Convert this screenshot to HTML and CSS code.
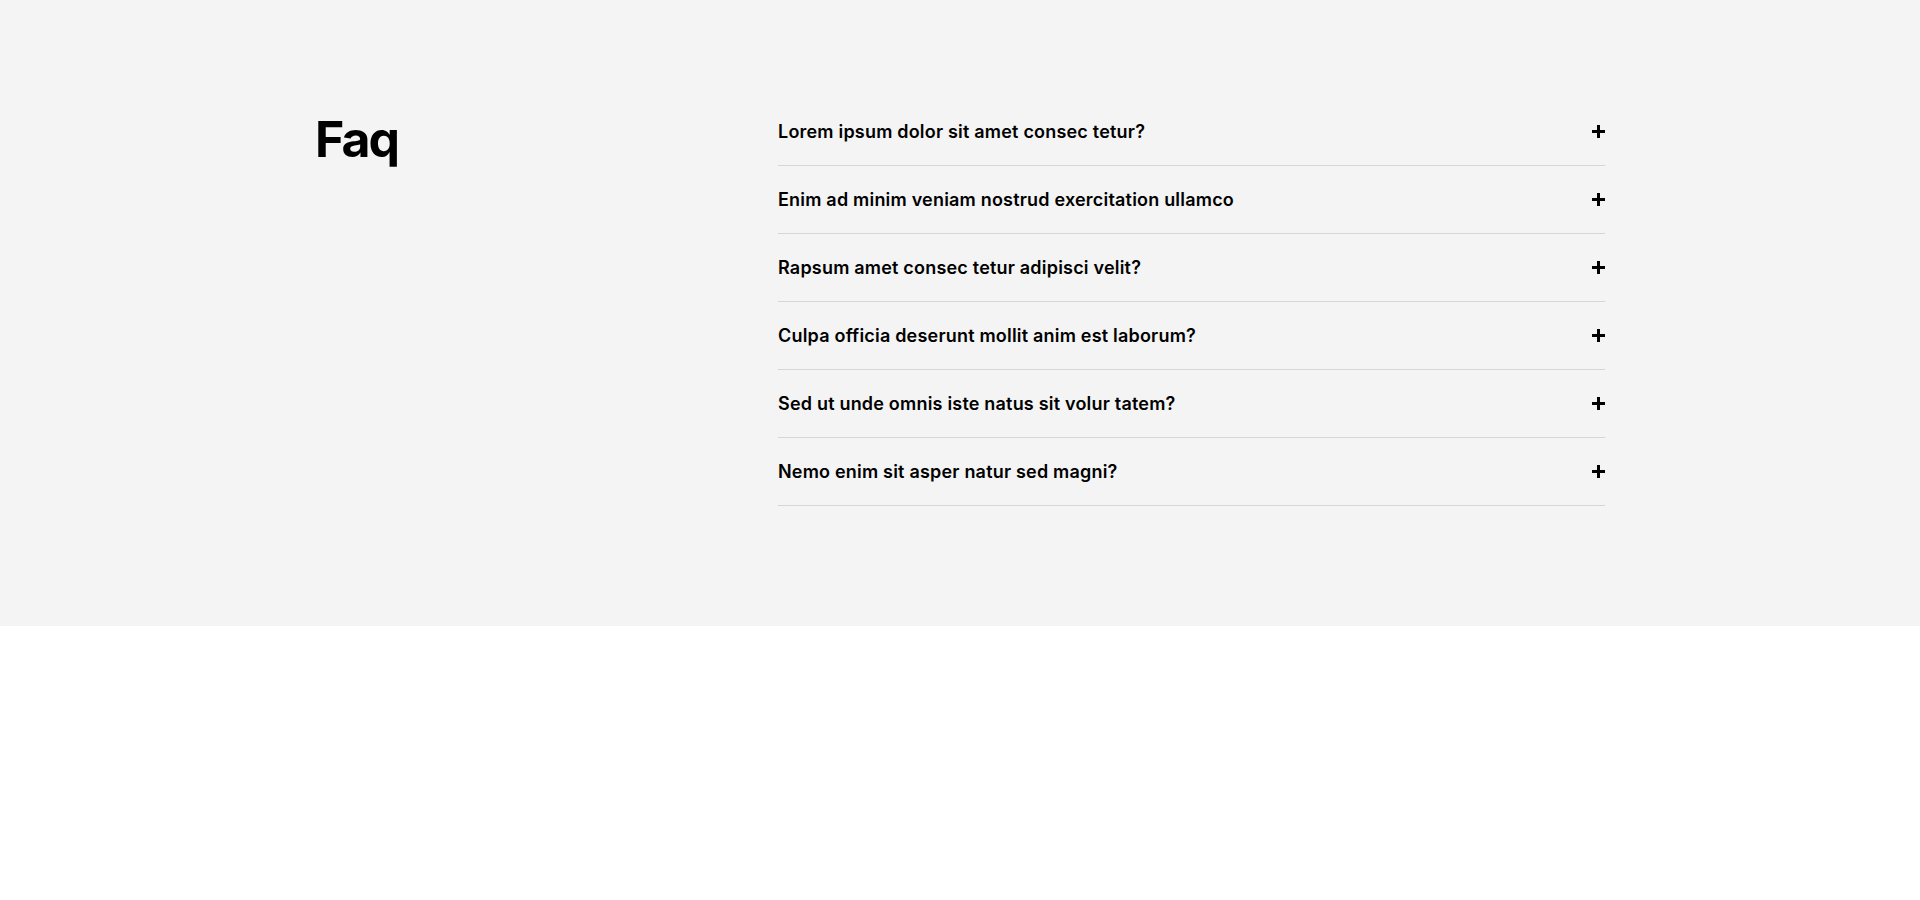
FILE: index.html
```html
<!DOCTYPE html>
<html lang="en">
  <head>
    <meta charset="UTF-8" />
    <meta name="viewport" content="width=device-width, initial-scale=1.0" />
    <title>Faq</title>
    <link rel="stylesheet" href="styles.css">
  </head>
  <body>
    <section id="faq">
      <div class="container">
        <h2 class="faq-title">Faq</h2>
        <ul class="faq-list">
          <li class="faq-item"><span>Lorem ipsum dolor sit amet consec tetur?</span><i class="plus"></i></li>
          <li class="faq-item"><span>Enim ad minim veniam nostrud exercitation ullamco</span><i class="plus"></i></li>
          <li class="faq-item"><span>Rapsum amet consec tetur adipisci velit?</span><i class="plus"></i></li>
          <li class="faq-item"><span>Culpa officia deserunt mollit anim est laborum?</span><i class="plus"></i></li>
          <li class="faq-item"><span>Sed ut unde omnis iste natus sit volur tatem?</span><i class="plus"></i></li>
          <li class="faq-item"><span>Nemo enim sit asper natur sed magni?</span><i class="plus"></i></li>
        </ul>
      </div>
    </section>
  </body>
</html>
```

FILE: styles.css
```css
* {
  box-sizing: border-box;
  margin: 0;
  padding: 0;
}

body {
  font-family: Inter, "Noto Sans", Arial, sans-serif;
  color: #000;
  background-color: #fff;
}

#faq {
  background-color: #f4f4f4;
  padding: 98px 0 120px;
}

.container {
  width: 1290px;
  margin: 0 auto;
  display: grid;
  grid-template-columns: 463px 1fr;
}

.faq-title {
  font-size: 50px;
  line-height: 60px;
  font-weight: 700;
  letter-spacing: -2px;
  margin-top: 11px;
}

.faq-list {
  list-style: none;
}

.faq-item {
  display: flex;
  justify-content: space-between;
  align-items: center;
  height: 68px;
  border-bottom: 1px solid #d6d6d6;
  font-size: 18px;
  font-weight: 600;
  letter-spacing: 0.2px;
  cursor: pointer;
}

.plus {
  position: relative;
  width: 13px;
  height: 13px;
}

.plus::before,
.plus::after {
  content: "";
  position: absolute;
  background-color: #000;
}

.plus::before {
  left: 0;
  top: 5px;
  width: 13px;
  height: 3px;
}

.plus::after {
  left: 5px;
  top: 0;
  width: 3px;
  height: 13px;
}
```
